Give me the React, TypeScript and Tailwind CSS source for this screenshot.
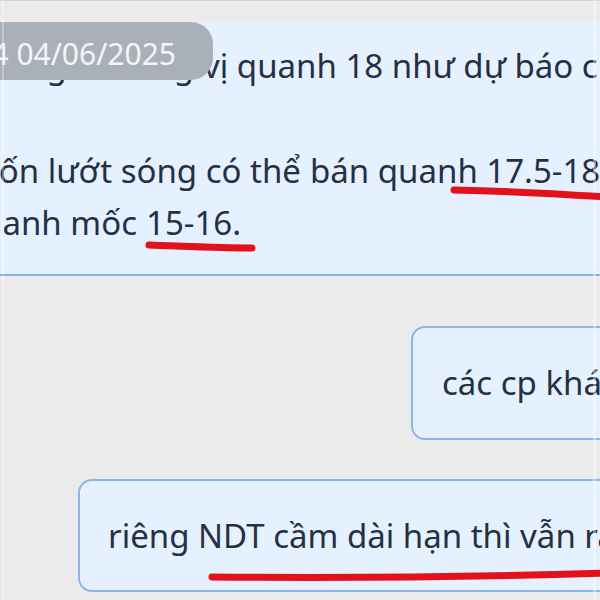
function Line({ anchor, before, after }: { anchor: string; before: string; after: string }) {
  return (
    <div className="flex whitespace-nowrap">
      <div className={`${anchor} shrink-0 flex justify-end`}>
        <span>{before}</span>
      </div>
      <span className="ml-[9px]">{after}</span>
    </div>
  )
}

export default function App() {
  return (
    <div className="relative w-[600px] h-[600px] overflow-hidden bg-[#ebebeb] font-['Noto_Sans',sans-serif] text-[#253043]">
      <div className="h-[22px] border-t border-[#d4d4d4]" />

      {/* received message */}
      <div className="relative w-[640px] h-[254px] bg-[#e5f1ff] border-b-2 border-[#86aee6] pt-[18px] text-[33px] leading-[52px]">
        <Line anchor="w-[194px]" before="Giá mong đà tăng" after="vị quanh 18 như dự báo cũ" />
        <div className="h-[53px]" />
        <Line anchor="w-[301px]" before="Ai muốn lướt sóng có thể" after="bán quanh 17.5-18 là hợp lý" />
        <Line anchor="w-[137px]" before="còn mua quanh mốc" after="15-16." />

        {/* date pill */}
        <div className="absolute left-0 top-0 w-[213px] h-[58px] rounded-r-[22px] bg-[#aab0b9] flex items-center justify-end pr-[37px] pt-[5px] text-[30px] text-[#f3f5f8] leading-none whitespace-nowrap">
          <span>14:24 04/06/2025</span>
        </div>
      </div>

      <div className="flex justify-end mt-[50px]">
        <div className="-mr-[60px] w-[249px] h-[114px] rounded-[14px] border-2 border-[#8db5ea] bg-[#e5f1ff] flex items-center pl-[29px] text-[33px] whitespace-nowrap overflow-hidden">
          các cp khác
        </div>
      </div>

      <div className="mt-[39px] ml-[78px] w-[600px] h-[113px] rounded-[14px] border-2 border-[#8db5ea] bg-[#e5f1ff] flex items-center pl-[28px] text-[33px] whitespace-nowrap overflow-hidden">
        riêng NDT cầm dài hạn thì vẫn rất ổn
      </div>

      {/* faint screen seams */}
      <div className="absolute top-0 bottom-0 left-[593px] w-[3px] bg-white/40" />
      <div className="absolute top-0 bottom-0 left-[2px] w-[2px] bg-white/30" />

      {/* red pen marks */}
      <svg className="absolute inset-0 pointer-events-none" width="600" height="600" viewBox="0 0 600 600">
        <g fill="none" stroke="#e3121a" strokeWidth="7" strokeLinecap="round">
          <path d="M454 190 C 500 191, 560 194, 606 197" />
          <path d="M149 245 C 180 246, 220 248, 252 248" />
          <path d="M212 577 C 330 578, 480 577, 606 573" />
        </g>
      </svg>
    </div>
  )
}
